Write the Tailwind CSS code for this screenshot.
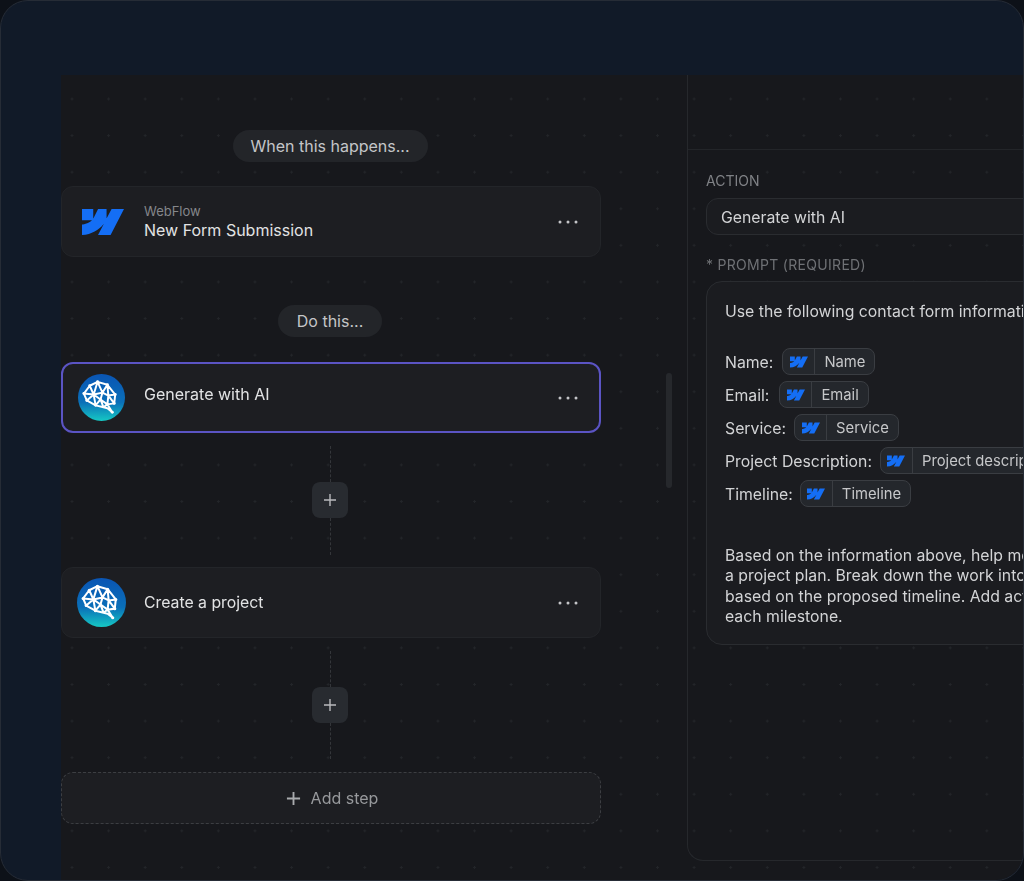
<!DOCTYPE html>
<html lang="en">
  <head>
    <meta charset="UTF-8" />
    <title>Workflow builder</title>
    <script src="https://cdn.jsdelivr.net/npm/@tailwindcss/browser@4"></script>
  </head>
  <body class="bg-[#0d1118] font-['Inter','Liberation_Sans',sans-serif] text-[#d8d9db]">
    <svg class="absolute h-0 w-0">
      <defs>
        <linearGradient id="brainBg" x1="0" y1="0" x2="0" y2="1">
          <stop offset="0" stop-color="#0a55b4" />
          <stop offset="0.6" stop-color="#0a6fb8" />
          <stop offset="1" stop-color="#16c8c4" />
        </linearGradient>
        <symbol id="webflow" viewBox="0 0 24 24">
          <path fill="#146ef5" d="M24 4.515l-7.658 14.97H9.149l3.205-6.204h-.144C9.566 16.713 5.621 18.973 0 19.485v-6.118s3.596-.213 5.71-2.435H0V4.515h6.417v5.278l.144-.001 2.622-5.277h4.854v5.244h.144l2.72-5.244H24z" />
        </symbol>
        <symbol id="brain" viewBox="0 0 48 48">
          <circle cx="24" cy="24" r="24" fill="url(#brainBg)" />
          <path fill="none" stroke="#fff" stroke-width="2" stroke-linejoin="round" stroke-linecap="round" d="M12 12L20 8L30 11L38 21L37 30L30 31L35 39L30 35L26 34L18 32L9 27L6 20L12 12M12 12L16 21L20 8L25 19L30 11L31 22L38 21M16 21L25 19L31 22L30 31L37 30M6 20L16 21L9 27M16 21L18 32L23 26L16 21M23 26L25 19M23 26L30 31L26 34L23 26M31 22L37 30" />
          <g fill="#fff">
            <circle cx="12" cy="12" r="1.5" />
            <circle cx="20" cy="8" r="1.5" />
            <circle cx="30" cy="11" r="1.5" />
            <circle cx="38" cy="21" r="1.5" />
            <circle cx="37" cy="30" r="1.5" />
            <circle cx="35" cy="39" r="1.5" />
            <circle cx="30" cy="31" r="1.5" />
            <circle cx="23" cy="26" r="1.5" />
            <circle cx="16" cy="21" r="1.5" />
            <circle cx="25" cy="19" r="1.5" />
            <circle cx="6" cy="20" r="1.5" />
            <circle cx="9" cy="27" r="1.5" />
            <circle cx="18" cy="32" r="1.5" />
          </g>
        </symbol>
        <symbol id="dots" viewBox="0 0 20 4">
          <circle cx="2" cy="2" r="1.5" fill="#c4c5c8" />
          <circle cx="10" cy="2" r="1.5" fill="#c4c5c8" />
          <circle cx="18" cy="2" r="1.5" fill="#c4c5c8" />
        </symbol>
      </defs>
    </svg>

    <div class="relative h-[881px] w-[1024px] overflow-hidden rounded-[28px] border border-[#262c36] bg-[#111a28] pt-[74px] pl-[60px] blur-[0.6px]">
      <div class="flex h-[807px] bg-[#17181c] bg-[radial-gradient(circle,#232529_1px,transparent_1.2px)] bg-[size:36.6px_36.6px] bg-[position:-7.3px_5.7px]">
        <!-- steps column -->
        <div class="relative w-[626px] shrink-0">
          <div class="flex w-[540px] flex-col items-center pt-[55px]">
            <div class="mr-[2px] flex h-8 w-[195px] items-center justify-center rounded-full bg-[#232529] text-[16px] text-[#c4c5c8]">When this happens...</div>

            <div class="mt-6 flex h-[71px] w-full items-center rounded-xl border border-[#232529] bg-[#1d1e22] pr-[22px] pl-5">
              <svg class="h-[42px] w-[42px]"><use href="#webflow" /></svg>
              <div class="ml-5 flex-1">
                <div class="pt-px text-[13px] leading-[16px] text-[#85878b]">WebFlow</div>
                <div class="text-[16px] leading-[23px] text-[#e2e3e4]">New Form Submission</div>
              </div>
              <svg class="h-1 w-5"><use href="#dots" /></svg>
            </div>

            <div class="mt-12 mr-[2px] flex h-8 w-[104px] items-center justify-center rounded-full bg-[#232529] text-[16px] text-[#c4c5c8]">Do this...</div>

            <div class="mt-[25px] flex h-[71px] w-full items-center rounded-xl border-2 border-[#5b54c4] bg-[#1d1e22] pr-[21px] pl-[15px]">
              <svg class="h-[47px] w-[47px]"><use href="#brain" /></svg>
              <div class="ml-[19px] flex-1 pb-2 text-[16px] text-[#e2e3e4]">Generate with AI</div>
              <svg class="h-1 w-5"><use href="#dots" /></svg>
            </div>

            <div class="mr-[2px] flex h-[134px] flex-col items-center pt-[13px]">
              <div class="h-[36px] border-l border-dashed border-[#34363a]"></div>
              <div class="flex h-9 w-9 items-center justify-center rounded-lg bg-[#282b30] text-[#b9babd]">
                <svg class="h-4 w-4" viewBox="0 0 16 16" fill="none" stroke="currentColor" stroke-width="1.4"><path d="M8 2v12M2 8h12" /></svg>
              </div>
              <div class="h-[37px] border-l border-dashed border-[#34363a]"></div>
            </div>

            <div class="flex h-[71px] w-full items-center rounded-xl border border-[#232529] bg-[#1d1e22] pr-[22px] pl-[15px]">
              <svg class="h-[49px] w-[49px]"><use href="#brain" /></svg>
              <div class="ml-[18px] flex-1 pt-px text-[15.8px] text-[#e2e3e4]">Create a project</div>
              <svg class="h-1 w-5"><use href="#dots" /></svg>
            </div>

            <div class="mr-[2px] flex h-[134px] flex-col items-center pt-[13px]">
              <div class="h-[36px] border-l border-dashed border-[#34363a]"></div>
              <div class="flex h-9 w-9 items-center justify-center rounded-lg bg-[#282b30] text-[#b9babd]">
                <svg class="h-4 w-4" viewBox="0 0 16 16" fill="none" stroke="currentColor" stroke-width="1.4"><path d="M8 2v12M2 8h12" /></svg>
              </div>
              <div class="h-[36px] border-l border-dashed border-[#34363a]"></div>
            </div>

            <div class="flex h-[52px] w-full items-center justify-center gap-[10px] rounded-xl border border-dashed border-[#3c3e42] bg-[#1d1e22] pl-[2px] text-[16px] text-[#97999c]">
              <svg class="h-[15px] w-[15px] text-[#a9abae]" viewBox="0 0 16 16" fill="none" stroke="currentColor" stroke-width="2"><path d="M8 1v14M1 8h14" /></svg>
              Add step
            </div>
          </div>
          <!-- scrollbar -->
          <div class="absolute top-[298px] left-[605px] h-[115px] w-[6px] rounded-full bg-[#26282c]"></div>
        </div>

        <!-- settings panel -->
        <div class="mb-[21px] flex-1 rounded-bl-2xl border-b border-l border-[#26282c]">
          <div class="h-[75px] border-b border-[#232529]"></div>
          <div class="pt-[23px] pl-[18px]">
            <div class="text-[14px] leading-[16px] text-[#7f8185]">ACTION</div>
            <div class="mt-[9px] flex h-[37px] w-[400px] items-center rounded-xl border border-[#2a2c30] bg-[#1b1c20] px-[14px] pt-[3px] text-[15.8px] text-[#d3d4d6]">Generate with AI</div>
            <div class="mt-[22px] text-[14px] leading-[16px] tracking-[0.3px] text-[#6f7175]">* PROMPT (REQUIRED)</div>
            <div class="mt-2 h-[364px] w-[400px] rounded-2xl border border-[#2a2c30] bg-[#1b1c20] pt-5 pl-[18px] text-[15.8px] whitespace-nowrap text-[#d3d4d6]">
              <div class="h-5 leading-5">Use the following contact form information</div>
              <div class="mt-[23px] flex h-[33px] items-center gap-[9px]">
                <span class="pt-[2px]">Name:</span>
                <div class="flex h-[27px] items-center rounded-lg border border-[#3a3d42] bg-[#24272c] text-[14.8px] text-[#c6c7c9]">
                  <div class="flex h-full w-8 items-center justify-center border-r border-[#3a3d42]"><svg class="h-[18px] w-[18px]"><use href="#webflow" /></svg></div>
                  <div class="px-[9px] pt-[2px]">Name</div>
                </div>
              </div>
              <div class="flex h-[33px] items-center gap-[10px]">
                <span class="pt-[2px]">Email:</span>
                <div class="flex h-[27px] items-center rounded-lg border border-[#3a3d42] bg-[#24272c] text-[14.8px] text-[#c6c7c9]">
                  <div class="flex h-full w-8 items-center justify-center border-r border-[#3a3d42]"><svg class="h-[18px] w-[18px]"><use href="#webflow" /></svg></div>
                  <div class="px-[9px] pt-[2px]">Email</div>
                </div>
              </div>
              <div class="flex h-[33px] items-center gap-2">
                <span class="pt-[2px]">Service:</span>
                <div class="flex h-[27px] items-center rounded-lg border border-[#3a3d42] bg-[#24272c] text-[14.8px] text-[#c6c7c9]">
                  <div class="flex h-full w-8 items-center justify-center border-r border-[#3a3d42]"><svg class="h-[18px] w-[18px]"><use href="#webflow" /></svg></div>
                  <div class="px-[9px] pt-[2px]">Service</div>
                </div>
              </div>
              <div class="flex h-[33px] items-center gap-2">
                <span class="pt-[2px]">Project Description:</span>
                <div class="flex h-[27px] items-center rounded-lg border border-[#3a3d42] bg-[#24272c] text-[14.8px] text-[#c6c7c9]">
                  <div class="flex h-full w-8 items-center justify-center border-r border-[#3a3d42]"><svg class="h-[18px] w-[18px]"><use href="#webflow" /></svg></div>
                  <div class="px-[9px] pt-[2px]">Project description</div>
                </div>
              </div>
              <div class="flex h-[33px] items-center gap-[7px]">
                <span class="pt-[2px]">Timeline:</span>
                <div class="flex h-[27px] items-center rounded-lg border border-[#3a3d42] bg-[#24272c] text-[14.8px] text-[#c6c7c9]">
                  <div class="flex h-full w-8 items-center justify-center border-r border-[#3a3d42]"><svg class="h-[18px] w-[18px]"><use href="#webflow" /></svg></div>
                  <div class="px-[9px] pt-[2px]">Timeline</div>
                </div>
              </div>
              <div class="mt-[36px] leading-[20.3px]">
                <div>Based on the information above, help me create</div>
                <div>a project plan. Break down the work into milestones</div>
                <div>based on the proposed timeline. Add action items to</div>
                <div>each milestone.</div>
              </div>
            </div>
          </div>
        </div>
      </div>
    </div>
  </body>
</html>
